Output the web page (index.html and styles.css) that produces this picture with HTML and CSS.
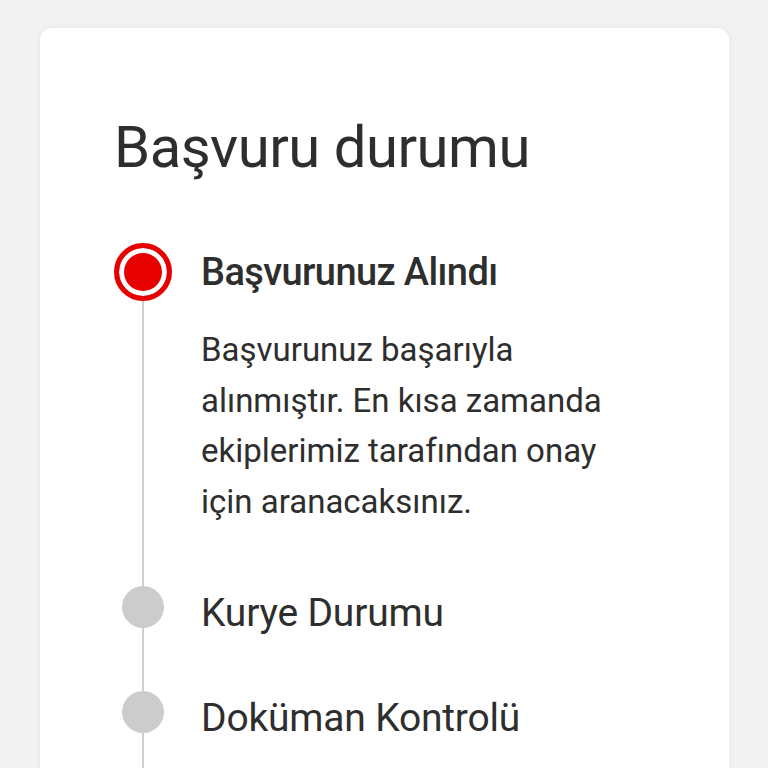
FILE: index.html
```html
<!DOCTYPE html>
<html lang="tr">
<head>
<meta charset="utf-8">
<link rel="stylesheet" href="styles.css">
</head>
<body>
<main class="page">
  <section class="card">
    <h1 class="title">Başvuru durumu</h1>
    <ol class="timeline">
      <li class="step step-first">
        <div class="marker">
          <span class="dot dot-active"></span>
          <span class="line"></span>
        </div>
        <div class="content">
          <h2 class="step-title">Başvurunuz Alındı</h2>
          <p class="step-text">Başvurunuz başarıyla alınmıştır. En kısa zamanda ekiplerimiz tarafından onay için aranacaksınız.</p>
        </div>
      </li>
      <li class="step step-short">
        <div class="marker">
          <span class="dot"></span>
          <span class="line"></span>
        </div>
        <div class="content">
          <h2 class="step-label">Kurye Durumu</h2>
        </div>
      </li>
      <li class="step step-short">
        <div class="marker">
          <span class="dot"></span>
          <span class="line"></span>
        </div>
        <div class="content">
          <h2 class="step-label">Doküman Kontrolü</h2>
        </div>
      </li>
    </ol>
  </section>
</main>
</body>
</html>
```
FILE: styles.css
```css
* { box-sizing: border-box; }
html, body { margin: 0; padding: 0; }
body {
  background: #f2f2f2;
  font-family: Roboto, "Liberation Sans", sans-serif;
  color: #2e2e2e;
  height: 768px;
  overflow: hidden;
}
.page {
  padding: 28px 39px 0 40px;
}
.card {
  background: #ffffff;
  border-radius: 12px;
  box-shadow: 0 0 6px rgba(0,0,0,0.06);
  padding: 84px 40px 0 74px;
  height: 760px;
}
.title {
  margin: 0;
  font-size: 58px;
  font-weight: 400;
  line-height: 70px;
  letter-spacing: -0.5px;
}
.timeline {
  list-style: none;
  margin: 61px 0 0 0;
  padding: 0;
  display: flex;
  flex-direction: column;
}
.step {
  display: grid;
  grid-template-columns: 58px 1fr;
  column-gap: 29px;
}
.step-first { height: 343px; }
.step-short { height: 105px; }
.marker {
  display: flex;
  flex-direction: column;
  align-items: center;
}
.dot {
  width: 42px;
  height: 42px;
  border-radius: 50%;
  background: #cccccc;
  flex: none;
}
.dot-active {
  width: 58px;
  height: 58px;
  background: #e60000;
  border: 5px solid #e60000;
  box-shadow: inset 0 0 0 5px #ffffff;
}
.line {
  width: 2px;
  flex: 1;
  background: #d0d0d0;
}
.content { min-width: 0; }
.step-title {
  margin: 0;
  font-size: 38px;
  font-weight: 500;
  line-height: 58px;
  letter-spacing: -0.6px;
}
.step-text {
  margin: 24px 0 0 0;
  font-size: 33px;
  line-height: 50.5px;
  max-width: 420px;
}
.step-label {
  margin: 0;
  padding-top: 6px;
  font-size: 39px;
  font-weight: 400;
  line-height: 42px;
  letter-spacing: -0.2px;
}
```
